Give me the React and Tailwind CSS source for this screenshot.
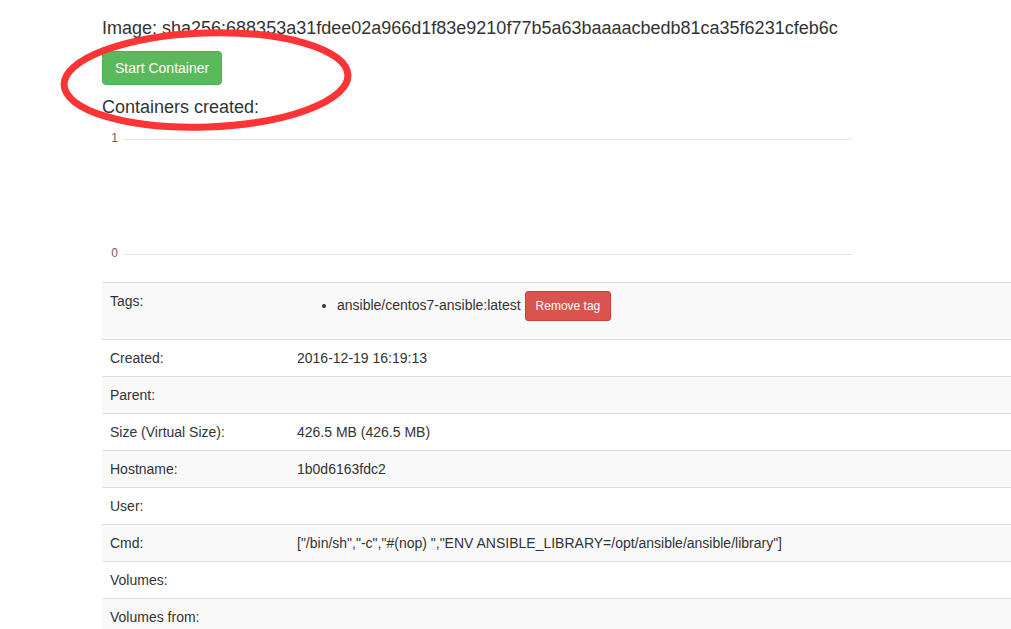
import React from "react";

const rows = [
  { label: "Tags:", tags: ["ansible/centos7-ansible:latest"] },
  { label: "Created:", value: "2016-12-19 16:19:13" },
  { label: "Parent:", value: "" },
  { label: "Size (Virtual Size):", value: "426.5 MB (426.5 MB)" },
  { label: "Hostname:", value: "1b0d6163fdc2" },
  { label: "User:", value: "" },
  {
    label: "Cmd:",
    value: '["/bin/sh","-c","#(nop) ","ENV ANSIBLE_LIBRARY=/opt/ansible/ansible/library"]',
  },
  { label: "Volumes:", value: "" },
  { label: "Volumes from:", value: "" },
];

function Chart() {
  return (
    <svg width="760" height="165" className="block">
      <line x1="21" y1="22.5" x2="750" y2="22.5" stroke="#e6e6e6" strokeWidth="1" />
      <line x1="21" y1="137.5" x2="750" y2="137.5" stroke="#e3e3e3" strokeWidth="1" />
      <text x="16" y="25" fontSize="12" fill="#666" textAnchor="end" fontFamily="Liberation Sans, Arial, sans-serif">
        1
      </text>
      <text x="16" y="140" fontSize="12" fill="#666" textAnchor="end" fontFamily="Liberation Sans, Arial, sans-serif">
        0
      </text>
    </svg>
  );
}

export default function App() {
  return (
    <div className="relative min-h-screen overflow-hidden bg-white font-['Liberation_Sans',Arial,sans-serif] text-[14px] leading-[20px] text-[#333]">
      <div className="pl-[102px] pt-[18px]">
        <h4 className="text-[18px] leading-[20px]">
          Image: sha256:688353a31fdee02a966d1f83e9210f77b5a63baaaacbedb81ca35f6231cfeb6c
        </h4>
        <button className="mt-[13px] h-[34px] rounded-[4px] border border-[#4cae4c] bg-[#5cb85c] px-3 text-[14px] text-white">
          Start Container
        </button>
        <h4 className="mt-[12px] text-[18px] leading-[20px]">Containers created:</h4>
        <Chart />
        <table className="w-[920px] border-collapse">
          <tbody>
            {rows.map((r, i) => (
              <tr key={r.label} className={i % 2 === 0 ? "bg-[#f9f9f9]" : "bg-white"}>
                <td className="w-[187px] border-t border-[#ddd] p-2 align-top">{r.label}</td>
                <td className="border-t border-[#ddd] p-2 align-top">
                  {r.tags ? (
                    <ul className="mb-[10px] list-disc pl-10">
                      {r.tags.map((t) => (
                        <li key={t}>
                          {t}{" "}
                          <button className="h-[30px] rounded-[3px] border border-[#d43f3a] bg-[#d9534f] px-[10px] text-[12px] text-white">
                            Remove tag
                          </button>
                        </li>
                      ))}
                    </ul>
                  ) : (
                    r.value
                  )}
                </td>
              </tr>
            ))}
          </tbody>
        </table>
      </div>
      <svg className="pointer-events-none absolute left-0 top-0" width="420" height="150">
        <ellipse
          cx="206"
          cy="80"
          rx="142"
          ry="47"
          fill="none"
          stroke="#fd3436"
          strokeWidth="7"
          transform="rotate(-2 206 80)"
        />
      </svg>
    </div>
  );
}
